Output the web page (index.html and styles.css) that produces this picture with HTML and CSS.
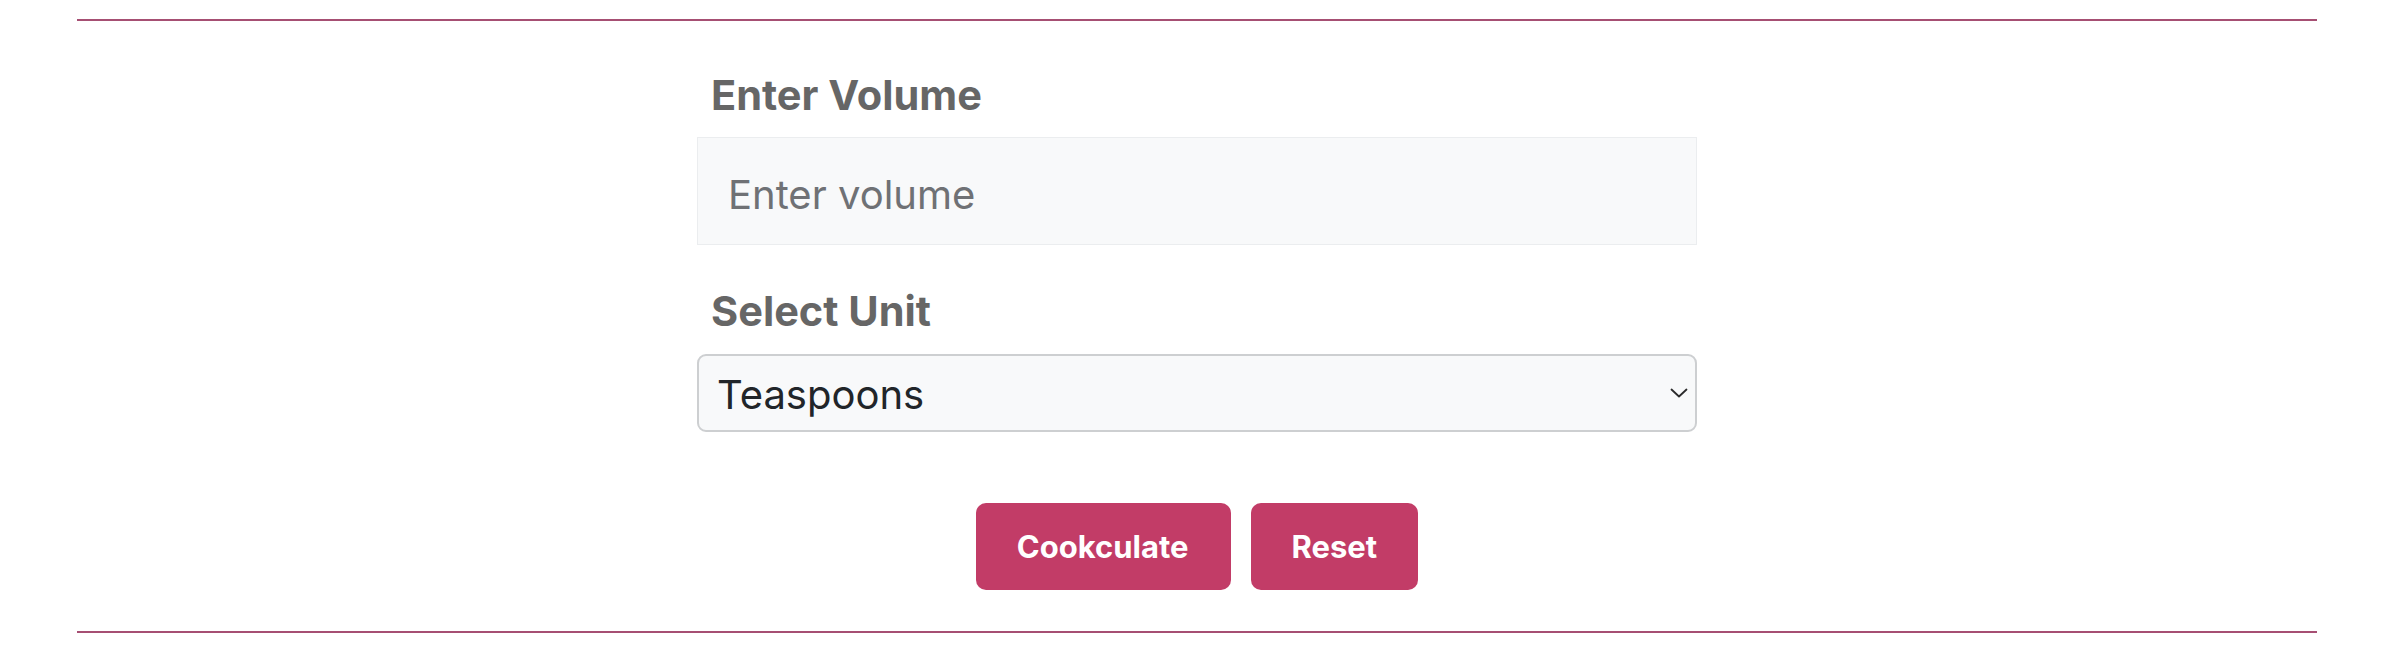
FILE: index.html
```html
<!DOCTYPE html>
<html lang="en">
<head>
<meta charset="utf-8">
<title>Cookculate</title>
<link rel="stylesheet" href="styles.css">
</head>
<body>
<hr class="rule rule-top">
<form class="converter">
  <div class="field">
    <label class="field-label" for="volume">Enter Volume</label>
    <input class="text-input" id="volume" type="text" placeholder="Enter volume">
  </div>
  <div class="field">
    <label class="field-label" for="unit">Select Unit</label>
    <div class="select-wrap">
      <select class="unit-select" id="unit">
        <option>Teaspoons</option>
        <option>Tablespoons</option>
        <option>Cups</option>
      </select>
      <svg class="chevron" width="18" height="10" viewBox="0 0 18 10" aria-hidden="true">
        <path d="M1.5 1.5 L9 8.5 L16.5 1.5" fill="none" stroke="#2b2b2b" stroke-width="1.8" stroke-linecap="round" stroke-linejoin="round"/>
      </svg>
    </div>
  </div>
  <div class="actions">
    <button class="btn btn-main" type="button">Cookculate</button>
    <button class="btn btn-reset" type="reset">Reset</button>
  </div>
</form>
<hr class="rule rule-bottom">
</body>
</html>
```
FILE: styles.css
```css
* { box-sizing: border-box; }

html, body {
  margin: 0;
  padding: 0;
  background: #ffffff;
}

body {
  font-family: Inter, "Noto Sans", "Liberation Sans", sans-serif;
  padding-top: 19px;
}

.rule {
  width: 2240px;
  height: 2px;
  margin: 0 auto;
  border: 0;
  background: #a64f73;
}

.converter {
  width: 1000px;
  margin: 0 auto;
  padding-top: 50px;
}

.field {
  display: flex;
  flex-direction: column;
}

.field + .field {
  margin-top: 42px;
}

.field-label {
  display: block;
  font-size: 41.5px;
  line-height: 49px;
  font-weight: 700;
  color: #666666;
  padding-left: 14px;
  margin-bottom: 17px;
}

.text-input {
  display: block;
  width: 100%;
  height: 108px;
  padding: 6px 30px 0;
  font-family: inherit;
  font-size: 40px;
  color: #212529;
  background: #f8f9fa;
  border: 1.5px solid #ebedef;
  border-radius: 0;
  outline: none;
}

.text-input::placeholder {
  color: #6f7175;
  opacity: 1;
}

.select-wrap {
  position: relative;
  margin-top: 1px;
}

.unit-select {
  display: block;
  width: 100%;
  height: 78px;
  padding: 2px 60px 0 18px;
  font-family: inherit;
  font-size: 40px;
  color: #212529;
  background: #f8f9fa;
  border: 2px solid #cdcfd1;
  border-radius: 9px;
  appearance: none;
  -webkit-appearance: none;
  outline: none;
}

.chevron {
  position: absolute;
  right: 9px;
  top: 34px;
  pointer-events: none;
}

.actions {
  display: flex;
  justify-content: center;
  gap: 20px;
  margin-top: 71px;
  margin-bottom: 41px;
}

.btn {
  height: 87px;
  padding: 0 42px;
  font-family: inherit;
  font-size: 31px;
  font-weight: 700;
  color: #ffffff;
  background: #c23c67;
  border: 0;
  border-radius: 10px;
  cursor: pointer;
}

.btn-main {
  padding: 0 42px 0 41px;
}

.btn-reset {
  padding: 0 41px;
}
```
